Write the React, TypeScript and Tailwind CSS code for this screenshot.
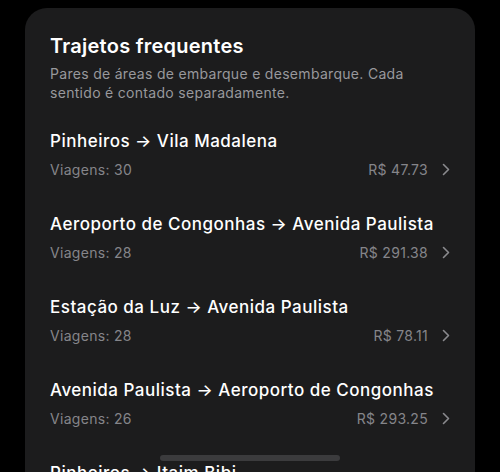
import React from "react";

const routes = [
  { name: "Pinheiros → Vila Madalena", trips: 30, price: "R$ 47.73" },
  { name: "Aeroporto de Congonhas → Avenida Paulista", trips: 28, price: "R$ 291.38" },
  { name: "Estação da Luz → Avenida Paulista", trips: 28, price: "R$ 78.11" },
  { name: "Avenida Paulista → Aeroporto de Congonhas", trips: 26, price: "R$ 293.25" },
  { name: "Pinheiros → Itaim Bibi", trips: 24, price: "R$ 52.10" },
];

function Chevron() {
  return (
    <svg width="8" height="13" viewBox="0 0 8 13" fill="none" className="ml-[14px] shrink-0">
      <path d="M1.5 1.5 L6.5 6.5 L1.5 11.5" stroke="#8a8a8e" strokeWidth="1.6" strokeLinecap="round" strokeLinejoin="round" />
    </svg>
  );
}

export default function App() {
  return (
    <div
      className="relative w-[500px] h-[472px] overflow-hidden bg-black"
      style={{ fontFamily: "Inter, 'Noto Sans', sans-serif" }}
    >
      <div className="mx-[25px] mt-[8px] rounded-[22px] bg-[#1c1c1d] px-[25px] pt-[26px] pb-[40px]">
        <h2 className="text-[20px] leading-[24px] font-semibold text-white tracking-[0.25px]">
          Trajetos frequentes
        </h2>
        <p className="mt-[6px] text-[14px] leading-[19px] text-[#98989c] tracking-[0.3px]">
          Pares de áreas de embarque e desembarque. Cada sentido é contado separadamente.
        </p>
        <div className="mt-[28px] flex flex-col gap-[34px]">
          {routes.map((r) => (
            <div key={r.name} className="flex flex-col">
              <div className="text-[17px] leading-[22px] font-medium text-white tracking-[0.5px]">{r.name}</div>
              <div className="mt-[8px] flex items-center text-[14px] leading-[19px] text-[#85858a] tracking-[0.3px]">
                <span className="flex-1">Viagens: {r.trips}</span>
                <span>{r.price}</span>
                <Chevron />
              </div>
            </div>
          ))}
        </div>
      </div>
      <div className="absolute left-[160px] top-[455px] h-[6px] w-[180px] rounded-full bg-[#3b3b3d]" />
    </div>
  );
}
